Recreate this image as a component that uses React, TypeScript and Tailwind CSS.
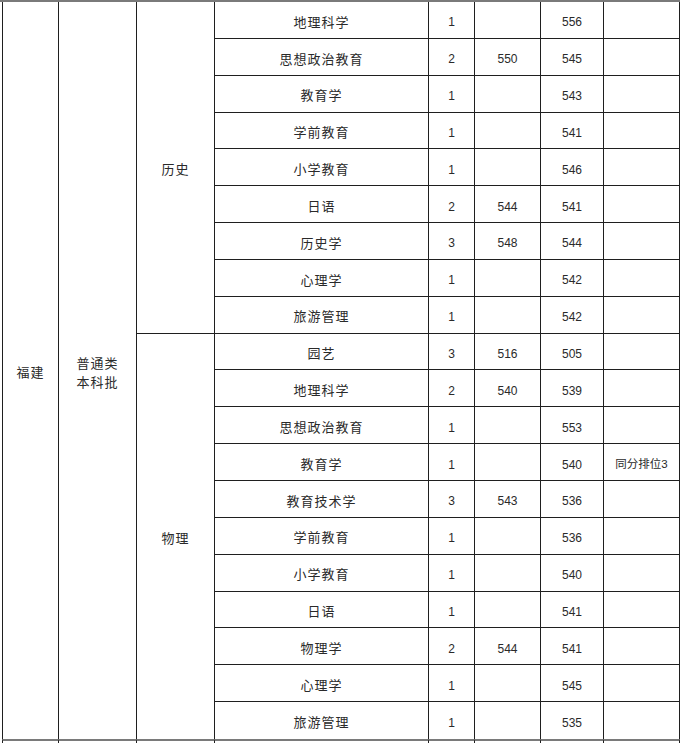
import React from "react";

type Row = { major: string; plan: string; max: string; min: string; note?: string };

const history: Row[] = [
  { major: "地理科学", plan: "1", max: "", min: "556" },
  { major: "思想政治教育", plan: "2", max: "550", min: "545" },
  { major: "教育学", plan: "1", max: "", min: "543" },
  { major: "学前教育", plan: "1", max: "", min: "541" },
  { major: "小学教育", plan: "1", max: "", min: "546" },
  { major: "日语", plan: "2", max: "544", min: "541" },
  { major: "历史学", plan: "3", max: "548", min: "544" },
  { major: "心理学", plan: "1", max: "", min: "542" },
  { major: "旅游管理", plan: "1", max: "", min: "542" },
];

const physics: Row[] = [
  { major: "园艺", plan: "3", max: "516", min: "505" },
  { major: "地理科学", plan: "2", max: "540", min: "539" },
  { major: "思想政治教育", plan: "1", max: "", min: "553" },
  { major: "教育学", plan: "1", max: "", min: "540", note: "同分排位3" },
  { major: "教育技术学", plan: "3", max: "543", min: "536" },
  { major: "学前教育", plan: "1", max: "", min: "536" },
  { major: "小学教育", plan: "1", max: "", min: "540" },
  { major: "日语", plan: "1", max: "", min: "541" },
  { major: "物理学", plan: "2", max: "544", min: "541" },
  { major: "心理学", plan: "1", max: "", min: "545" },
  { major: "旅游管理", plan: "1", max: "", min: "535" },
];

const cell = "p-0 pt-[5px] text-center align-middle border-r border-[#1f1f1f]";
const cjk = "text-[13px] tracking-[1px]";
const num = "text-[12px]";

function DataCells({ row, last }: { row: Row; last: boolean }) {
  const b = last ? "" : "border-b";
  return (
    <>
      <td className={`${cell} ${b} ${cjk}`}>{row.major}</td>
      <td className={`${cell} ${b} ${num}`}>{row.plan}</td>
      <td className={`${cell} ${b} ${num}`}>{row.max}</td>
      <td className={`${cell} ${b} ${num}`}>{row.min}</td>
      <td className={`${cell} ${b} text-[11.5px]`}>{row.note}</td>
    </>
  );
}

export default function App() {
  return (
    <div className="w-[682px] h-[743px] overflow-hidden bg-white text-[#2a2a2a] font-['Liberation_Sans','Noto_Sans_CJK_SC',sans-serif]">
      {/* top edge of the cropped row above */}
      <div className="h-[2px] w-[680px] bg-[#7a7a7a]" />

      <table className="ml-[2px] w-[678px] table-fixed border-separate border-spacing-0">
        <colgroup>
          <col className="w-[57px]" />
          <col className="w-[78px]" />
          <col className="w-[78px]" />
          <col className="w-[214px]" />
          <col className="w-[46px]" />
          <col className="w-[66px]" />
          <col className="w-[63px]" />
          <col className="w-[76px]" />
        </colgroup>
        <tbody>
          {history.map((row, i) => (
            <tr key={"h" + i} className="h-[36.85px]">
              {i === 0 && (
                <>
                  <td rowSpan={20} className={`${cell} border-l ${cjk}`}>
                    福建
                  </td>
                  <td rowSpan={20} className={`${cell} ${cjk} leading-[19px]`}>
                    普通类
                    <br />
                    本科批
                  </td>
                  <td rowSpan={9} className={`${cell} border-b ${cjk}`}>
                    历史
                  </td>
                </>
              )}
              <DataCells row={row} last={false} />
            </tr>
          ))}
          {physics.map((row, i) => (
            <tr key={"p" + i} className="h-[36.85px]">
              {i === 0 && (
                <td rowSpan={11} className={`${cell} ${cjk}`}>
                  物理
                </td>
              )}
              <DataCells row={row} last={i === physics.length - 1} />
            </tr>
          ))}
          {/* start of the next, cropped row */}
          <tr className="h-[8px]">
            <td className="p-0 border-t-2 border-t-[#7a7a7a] border-l border-l-[#1f1f1f] border-r border-r-[#1f1f1f]" />
            {Array.from({ length: 7 }).map((_, i) => (
              <td
                key={i}
                className="p-0 border-t-2 border-t-[#7a7a7a] border-r border-r-[#1f1f1f]"
              />
            ))}
          </tr>
        </tbody>
      </table>
    </div>
  );
}
